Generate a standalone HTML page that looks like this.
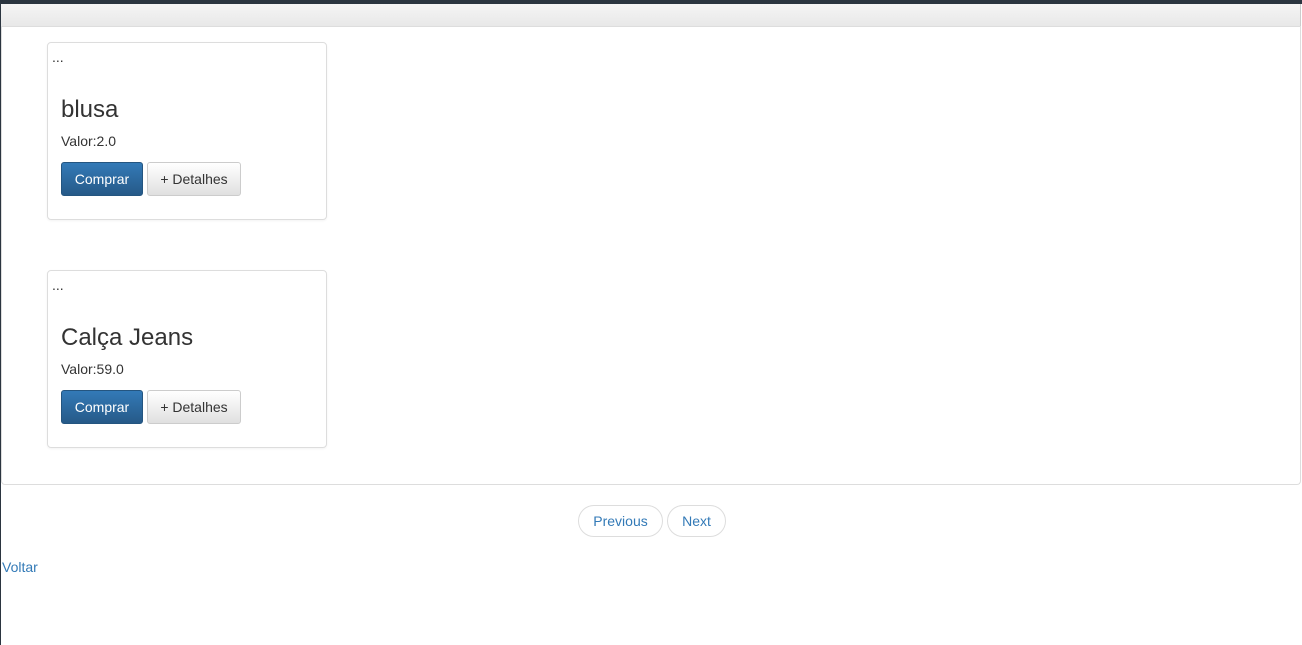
<!DOCTYPE html>
<html><head><meta charset="utf-8"><style>
*{box-sizing:border-box;margin:0;padding:0}
body{width:1302px;height:645px;overflow:hidden;background:#fff;font-family:"Liberation Sans",sans-serif;font-size:14px;color:#333;position:relative}
.top{position:absolute;left:0;top:0;width:1302px;height:4px;background:#2b3540}
.left{position:absolute;left:0;top:0;width:1px;height:645px;background:#2b3540}
.nav{position:absolute;left:1px;top:4px;width:1300px;height:23px;background:linear-gradient(#f5f5f5,#e8e8e8);border-bottom:1px solid #ddd;border-right:1px solid #ccc}
.panel{position:absolute;left:1px;top:26px;width:1300px;height:459px;border:1px solid #ddd;border-top:none;border-radius:0 0 4px 4px}
.card{position:absolute;left:47px;width:280px;height:178px;border:1px solid #ddd;border-radius:4px;box-shadow:0 1px 2px rgba(0,0,0,.05)}
.dots{position:absolute;left:4px;top:6px;font-size:14px}
.title{position:absolute;left:13px;top:53px;font-size:24px;color:#333}
.val{position:absolute;left:13px;top:90px;font-size:14px}
.btn{position:absolute;top:119px;height:34px;border-radius:3px;font-size:14px;line-height:32px;text-align:center}
.b1{left:13px;width:82px;background:linear-gradient(#337ab7,#265a88);border:1px solid #245580;color:#fff}
.b2{left:99px;width:94px;background:linear-gradient(#fff,#e0e0e0);border:1px solid #ccc;color:#333}
.pg{position:absolute;top:505px;height:32px;border:1px solid #ddd;border-radius:16px;color:#337ab7;font-size:14px;line-height:30px;text-align:center}
a{color:#337ab7;text-decoration:none}
</style></head><body>
<div class="top"></div><div class="left"></div>
<div class="nav"></div>
<div class="panel"></div>
<div class="card" style="top:42px"><div class="dots">...</div><div class="title">blusa</div><div class="val">Valor:2.0</div><div class="btn b1">Comprar</div><div class="btn b2">+ Detalhes</div></div>
<div class="card" style="top:270px"><div class="dots">...</div><div class="title">Calça Jeans</div><div class="val">Valor:59.0</div><div class="btn b1">Comprar</div><div class="btn b2">+ Detalhes</div></div>
<div class="pg" style="left:578px;width:85px">Previous</div>
<div class="pg" style="left:667px;width:59px">Next</div>
<a style="position:absolute;left:2px;top:559px">Voltar</a>
</body></html>
